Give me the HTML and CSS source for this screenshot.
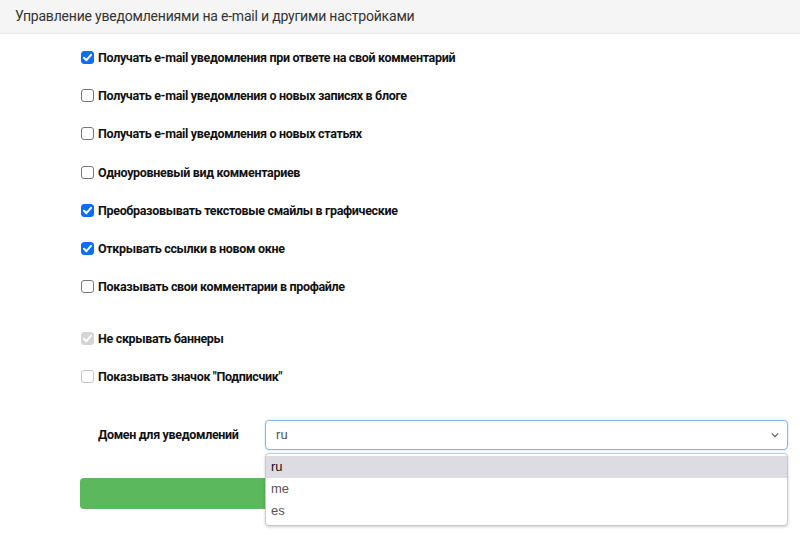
FILE: index.html
```html
<!DOCTYPE html>
<html lang="ru">
<head>
<meta charset="utf-8">
<link rel="stylesheet" href="styles.css">
</head>
<body>
<div class="panel">
  <div class="panel-heading">Управление уведомлениями на e-mail и другими настройками</div>
  <div class="panel-body">
    <div class="group">
      <label class="row"><span class="cb on"><svg viewBox="0 0 13 13"><path d="M3 6.8 L5.4 9.2 L10 3.8" /></svg></span>Получать e-mail уведомления при ответе на свой комментарий</label>
      <label class="row"><span class="cb"></span>Получать e-mail уведомления о новых записях в блоге</label>
      <label class="row"><span class="cb"></span>Получать e-mail уведомления о новых статьях</label>
      <label class="row"><span class="cb"></span>Одноуровневый вид комментариев</label>
      <label class="row"><span class="cb on"><svg viewBox="0 0 13 13"><path d="M3 6.8 L5.4 9.2 L10 3.8" /></svg></span>Преобразовывать текстовые смайлы в графические</label>
      <label class="row"><span class="cb on"><svg viewBox="0 0 13 13"><path d="M3 6.8 L5.4 9.2 L10 3.8" /></svg></span>Открывать ссылки в новом окне</label>
      <label class="row"><span class="cb"></span>Показывать свои комментарии в профайле</label>
    </div>
    <div class="group group2">
      <label class="row"><span class="cb dis"><svg viewBox="0 0 13 13"><path d="M3 6.8 L5.4 9.2 L10 3.8" /></svg></span>Не скрывать баннеры</label>
      <label class="row"><span class="cb light"></span>Показывать значок "Подписчик"</label>
    </div>
    <div class="domain">
      <span class="domain-label">Домен для уведомлений</span>
      <div class="select-wrap">
        <div class="select"><span>ru</span><svg class="chev" viewBox="0 0 10 6"><path d="M1 1 L5 5 L9 1" /></svg></div>
        <ul class="menu">
          <li class="hl">ru</li>
          <li>me</li>
          <li>es</li>
        </ul>
      </div>
    </div>
    <div class="btn"></div>
  </div>
</div>
</body>
</html>
```
FILE: styles.css
```css
* { box-sizing: border-box; }
html, body { margin: 0; padding: 0; background: #fff; }
body { font-family: Roboto, "Noto Sans", sans-serif; color: #111; width: 800px; height: 554px; overflow: hidden; }
.panel-heading {
  height: 34px;
  background: #f5f5f5;
  border-bottom: 1px solid #e8e8e8;
  padding: 8px 0 0 15px;
  font-size: 14px;
  letter-spacing: -0.2px;
  color: #333;
}
.panel-body { padding: 4px 12px 0 80px; }
.group { display: flex; flex-direction: column; }
.row {
  display: flex;
  align-items: center;
  height: 38.3px;
  font-size: 12.5px;
  font-weight: 700;
  letter-spacing: -0.33px;
}
.group2 { margin-top: 13px; }
.cb {
  width: 13px; height: 13px;
  border: 1px solid #767676;
  border-radius: 3px;
  margin: 0 4px 0 1px;
  background: #fff;
  flex: none;
  display: flex;
}
.cb svg { width: 13px; height: 13px; margin: -1px; }
.cb path { fill: none; stroke: #fff; stroke-width: 2; stroke-linecap: round; stroke-linejoin: round; }
.cb.on { background: #0b6ef4; border-color: #0b6ef4; }
.cb.dis { background: #d4d4d4; border-color: #d4d4d4; }
.cb.light { border-color: #c4c4c4; }
.domain { display: flex; align-items: center; margin-top: 24px; height: 30px; }
.domain-label { width: 185px; padding-left: 18px; font-size: 12.5px; font-weight: 700; letter-spacing: -0.33px; }
.select-wrap { position: relative; flex: 1; height: 30px; }
.select {
  height: 30px;
  border: 1px solid #8ab4e8;
  border-radius: 4px;
  display: flex;
  align-items: center;
  justify-content: space-between;
  padding: 0 8px 0 10px;
  font-size: 13px;
  color: #555;
  box-shadow: 0 0 2px rgba(102,175,233,0.5);
}
.chev { width: 8px; height: 6px; }
.chev path { fill: none; stroke: #555; stroke-width: 1.4; }
.menu {
  position: absolute;
  left: 0; right: 0; top: 33px;
  margin: 0; padding: 2px 0 3px;
  list-style: none;
  background: #fff;
  border: 1px solid #c9c9c9;
  border-radius: 4px;
  box-shadow: 0 1px 3px rgba(0,0,0,0.2);
  font-family: "Liberation Sans", Arial, sans-serif;
  font-size: 13px;
  color: #555;
  z-index: 2;
}
.menu li { height: 22px; line-height: 22px; padding-left: 5px; }
.menu li.hl { background: #dcdce2; color: #111; }
.btn {
  margin-top: 28px;
  height: 31px;
  background: #5cb85c;
  border-radius: 4px;
  width: 706px;
}
```
